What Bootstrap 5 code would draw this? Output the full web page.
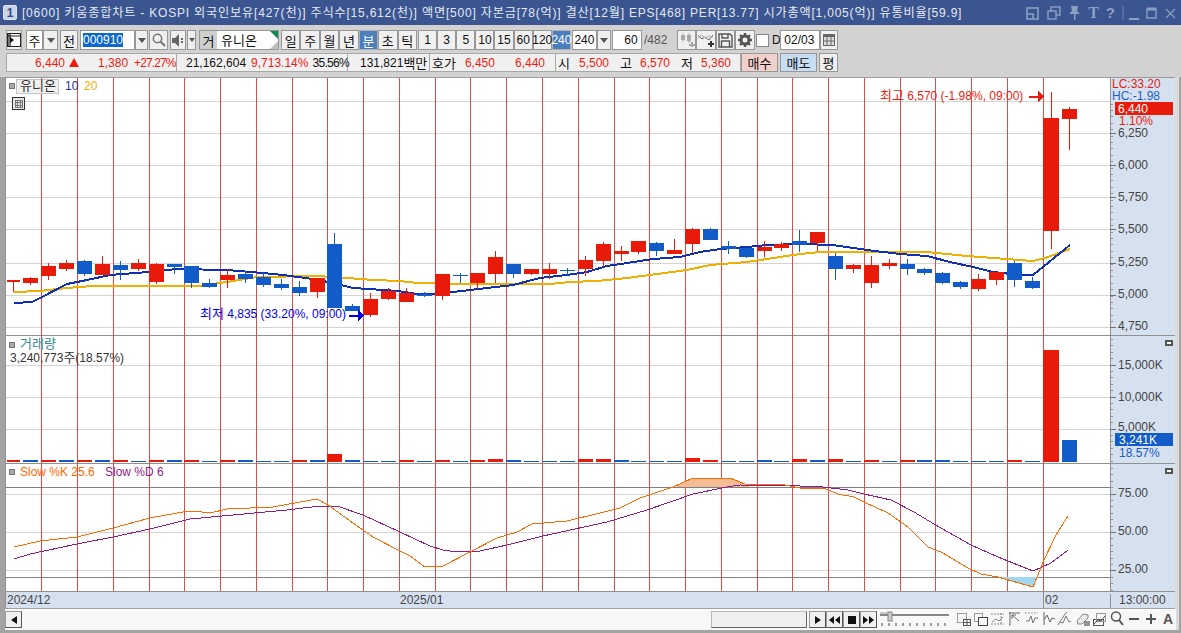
<!DOCTYPE html>
<html lang="ko">
<head>
<meta charset="utf-8">
<title>키움종합차트</title>
<link href="https://cdn.jsdelivr.net/npm/bootstrap@5.3.0/dist/css/bootstrap.min.css" rel="stylesheet">
<style>
html,body{height:100%;overflow:hidden}
body{font-family:"Liberation Sans","Noto Sans CJK KR",sans-serif;font-size:12px;line-height:1;background:linear-gradient(to right,#a3a3a3 0 5px,#dcdcdc 5px 1179px,#a3a3a3 1179px);color:#111}
.ko{font-family:"Noto Sans CJK KR","Liberation Sans",sans-serif;font-size:13px}
.hts-win{width:1181px;height:633px}
.hts-title{height:25px;background:#3a5590;color:#e4e9f3;padding-left:3px;font-size:12px;white-space:nowrap;flex:none}
.hts-titletext{letter-spacing:.79px}
.hts-title .ko{font-size:12.2px}
.hts-num{width:14px;height:15px;border:1px solid #dfe5f0;border-radius:2px;background:#c9d4e6;color:#2c4a8a;font-weight:700;margin-right:5px;font-size:12px}
.hts-ticons{margin-left:auto;padding-right:5px;gap:7px;color:#8d9fc3}
.ti-t{font:700 16px "Liberation Serif",serif}
.ti-q{font:700 15px "Liberation Sans",sans-serif}
.hts-tools{background:#d2d2d2;height:52px;padding:5px 0 0 6px;flex:none}
.hts-row1{height:20px;margin-bottom:3px}
.hts-row2{height:19px}
.btn.tb{--bs-btn-padding-x:0;--bs-btn-padding-y:0;--bs-btn-font-size:12px;--bs-btn-border-radius:0;--bs-btn-bg:#f0f0f0;--bs-btn-border-color:#979797;--bs-btn-color:#111;height:100%;display:flex;align-items:center;justify-content:center;flex:none;line-height:1;border-width:1px}
.btn.tb.on{--bs-btn-bg:#4a7ebd;--bs-btn-color:#fff;--bs-btn-border-color:#b0b0b0}
.tb-white{background:#fff;border:1px solid #979797;height:100%;display:flex;align-items:center;flex:none}
.wi16{width:16px}.wi9{width:9px}.wi13{width:13px}.wi14{width:14px}.wi15{width:15px}.wi17{width:17px}.wi18{width:18px}.wi19{width:19px}
.wi-d{width:19.43px}.wi-m{width:19.13px}.wi-t{width:19.5px}.wi25{width:25px}.wi30{width:30px}.wi40{width:40px}.wi55{width:55px}.wi80{width:80px}
.ml1{margin-left:1px}.ml2{margin-left:2px}.ml3{margin-left:3px}.ml4{margin-left:4px}
.hl{background:#0a68d0;color:#fff;padding:1px 0;margin-left:2px}
.gu{background:#cfcfcf;width:17px;height:100%;display:flex;align-items:center;justify-content:center}
.tri{position:absolute;right:0;top:0}
.hts-info{width:735px;height:100%;background:#f0f0f0;border:1px solid #a8a8a8;flex:none}
.cell{height:100%;display:flex;align-items:center;white-space:nowrap;flex:none}
.bd-r{border-right:1px solid #a8a8a8}
.red{color:#ee1c10}
.pct1{letter-spacing:-.9px}.pct2{letter-spacing:-.7px}
.cw170{width:170px}.cw171{width:171px}.cw82{width:82px}.cw126{width:126px}.rest{flex:1}
.pl28{padding-left:28px}.pl9{padding-left:9px}.pl12{padding-left:12px}.pl2{padding-left:2px}
.gapL5{margin-left:5px}.gapL4{margin-left:4px}.gapL6{margin-left:6px}.gapL9{margin-left:9px}.gapL11{margin-left:11px}.gapL19{margin-left:19px}.gapL20{margin-left:20px}.gapL8{margin-left:8px}
.noshrink{flex:none}
.buy{width:37px}
.sell{width:37px;margin-left:2px}
.btn.tb.buy{--bs-btn-bg:#f2d0cb}
.btn.tb.sell{--bs-btn-bg:#c7ddf3}
.greytxt{color:#555;width:35px;padding-left:2px;flex:none}
.dlbl{margin-left:3px;width:8px;flex:none}
.chk{width:13px;height:13px;background:#fff;border:1px solid #888;margin-left:1px;flex:none}
.hts-chart{margin-left:5px;width:1171px;height:533px;background:#fff;display:block;flex:none}
.hts-chart text{font-family:"Liberation Sans","Noto Sans CJK KR",sans-serif;font-size:12px}
.hts-chart .ko{font-size:13px}
.hts-scroll{height:20px;margin-left:5px;width:1171px;background:#f8f8f8;padding-top:1px;flex:none}
.sb-track{flex:1}
.sb-thumb{width:96px;height:17px;margin-right:2px;background:#efefef;border:1px solid #bbb;border-right-color:#666;border-bottom-color:#666;flex:none}
.btn.tb.sbb{height:17px;width:17px;--bs-btn-border-color:#999;border-right-color:#555;border-bottom-color:#555}
.bi-a{font:700 14px "Liberation Sans",sans-serif}
.hts-foot{height:3px;background:#a3a3a3;flex:none}
</style>
</head>
<body>
<div class="hts-win d-flex flex-column">
  <div class="hts-title d-flex align-items-center">
    <span class="hts-num d-flex align-items-center justify-content-center">1</span>
    <span class="hts-titletext">[0600] 키움종합차트 - KOSPI 외국인보유[427(천)] 주식수[15,612(천)] 액면[500] 자본금[78(억)] 결산[12월] EPS[468] PER[13.77] 시가총액[1,005(억)] 유통비율[59.9]</span>
    <div class="hts-ticons d-flex align-items-center">
      <svg width="14" height="14" viewBox="0 0 14 14" fill="none" stroke="#8d9fc3" stroke-width="1.6"><rect x="1" y="2" width="11" height="11"/><path d="M1 8h6v5"/></svg>
      <svg width="14" height="14" viewBox="0 0 14 14" fill="none" stroke="#8d9fc3" stroke-width="1.4"><rect x="4" y="1" width="9" height="8"/><rect x="1" y="5" width="8" height="8" fill="#3a5590"/></svg>
      <svg width="13" height="15" viewBox="0 0 13 15" fill="#8d9fc3"><path d="M3 1h7l-1 5 3 3H1l3-3zM6 9h1.400v6H6z"/></svg>
      <span class="ti-t">T</span>
      <span class="ti-q">?</span>
      <svg width="54" height="16" viewBox="0 0 54 16" fill="none" stroke="#8d9fc3" stroke-width="2"><path d="M1 1v14" stroke-width="1" stroke="#7186b0"/><path d="M7 14h10"/><rect x="25" y="4" width="9" height="9" stroke-width="1.4"/><path d="M25 4h9" stroke-width="3"/><path d="M44 4l9 9m0-9l-9 9" stroke-width="1.2"/></svg>
    </div>
  </div>

  <div class="hts-tools">
    <div class="hts-row1 d-flex">
      <button class="btn tb wi16"><svg width="14" height="14" viewBox="0 0 14 14"><rect x=".5" y=".5" width="13" height="13" fill="#fff" stroke="#222"/><rect x="1" y="1" width="3" height="12" fill="#777"/><path d="M1 3h12" stroke="#222"/><path d="M7 7L3 4v6z" fill="#111"/></svg></button>
      <div class="tb-white wi17 ml4 justify-content-center">주</div>
      <button class="btn tb wi15"><svg width="8" height="5"><path d="M0 0h8L4 5z" fill="#555"/></svg></button>
      <button class="btn tb wi18 ml2">전</button>
      <div class="tb-white wi55 ml2"><span class="hl">000910</span></div>
      <button class="btn tb wi13"><svg width="8" height="5"><path d="M0 0h8L4 5z" fill="#555"/></svg></button>
      <button class="btn tb wi19 ml1"><svg width="14" height="14" viewBox="0 0 14 14" fill="none" stroke="#777" stroke-width="1.5"><circle cx="5.5" cy="5.5" r="4.2"/><path d="M8.700 8.700L13 13" stroke-width="2"/></svg></button>
      <button class="btn tb wi16 ml2"><svg width="13" height="13" viewBox="0 0 13 13" fill="#666"><path d="M0 4h3l4-4v13L3 9H0z"/><path d="M9 4h2v2H9zM9 7h2v2H9z"/></svg></button>
      <button class="btn tb wi9 ml1"><svg width="6" height="4"><path d="M0 0h6L3 4z" fill="#555"/></svg></button>
      <div class="tb-white wi80 ml3 position-relative"><span class="gu">거</span><span class="ms-1">유니온</span>
        <svg class="tri" width="9" height="18" viewBox="0 0 9 18"><path d="M1 0h8v8z" fill="#0c8a50"/><path d="M9 10v8H1z" fill="#c0c0c0"/></svg></div>
      <button class="btn tb wi-d ml2">일</button><button class="btn tb wi-d">주</button><button class="btn tb wi-d">월</button><button class="btn tb wi-d">년</button><button class="btn tb wi-d on">분</button><button class="btn tb wi-d">초</button><button class="btn tb wi-d">틱</button>
      <button class="btn tb wi-m ml1">1</button><button class="btn tb wi-m">3</button><button class="btn tb wi-m">5</button><button class="btn tb wi-m">10</button><button class="btn tb wi-m">15</button><button class="btn tb wi-m">60</button><button class="btn tb wi-m">120</button><button class="btn tb wi-m on">240</button>
      <div class="tb-white wi25 ml1 justify-content-center">240</div>
      <button class="btn tb wi14"><svg width="8" height="5"><path d="M0 0h8L4 5z" fill="#555"/></svg></button>
      <div class="tb-white wi30 ml1 justify-content-end">60&nbsp;</div>
      <div class="greytxt d-flex align-items-center">/482</div>
      <button class="btn tb wi-t"><svg width="16" height="14" viewBox="0 0 16 14" fill="#a8a8a8"><path d="M2 2h4v5H2zM8 2h4v6H8zM12 9h2v2h2v2h-2v1h-2v-1h-2v-2h2zM3.500 0h1v9h-1zM9.500 0h1v10h-1z"/></svg></button>
      <button class="btn tb wi-t"><svg width="17" height="14" viewBox="0 0 17 14" fill="none" stroke="#666"><path d="M0 2l4 4 3-2 4 3 4-5"/><path d="M0 5l4-3 3 3 4-2 4 1" stroke="#aaa"/><path d="M12 8h2v2h2v2h-2v2h-2v-2h-2v-2h2z" fill="#333" stroke="none"/></svg></button>
      <button class="btn tb wi-t"><svg width="15" height="15" viewBox="0 0 15 15" fill="none" stroke="#555" stroke-width="1.400"><path d="M1 1h11l2 2v11H1z"/><path d="M4 1v4h6V1M3.500 14V8h8v6"/></svg></button>
      <button class="btn tb wi-t"><svg width="14" height="14" viewBox="0 0 14 14"><circle cx="7" cy="7" r="4" fill="none" stroke="#555" stroke-width="3"/><path d="M7 0v3M7 11v3M0 7h3M11 7h3M2 2l2 2M10 10l2 2M12 2l-2 2M2 12l2-2" stroke="#555" stroke-width="2.400"/></svg></button>
      <div class="align-self-center chk"></div>
      <div class="dlbl align-self-center">D</div>
      <div class="tb-white wi40">&nbsp;02/03</div>
      <button class="btn tb wi18"><svg width="12" height="12" viewBox="0 0 12 12"><rect width="12" height="12" fill="#666"/><rect x="1" y="3" width="10" height="8" fill="#ddd"/><path d="M4 3v8M8 3v8M1 7h10" stroke="#666"/></svg></button>
    </div>
    <div class="hts-row2 d-flex">
      <div class="hts-info d-flex">
        <div class="cell cw170 bd-r red pl28"><span>6,440</span><svg class="gapL4 noshrink" width="10" height="9"><path d="M5 0l5 9H0z" fill="#ee1c10"/></svg><span class="gapL19">1,380</span><span class="gapL6 pct1">+27.27%</span></div>
        <div class="cell cw171 bd-r pl9"><span>21,162,604</span><span class="red gapL5">9,713.14%</span><span class="gapL4 pct2">35.56%</span></div>
        <div class="cell cw82 bd-r pl12">131,821백만</div>
        <div class="cell cw126 bd-r pl2"><span>호가</span><span class="red gapL9">6,450</span><span class="red gapL20">6,440</span></div>
        <div class="cell rest pl2"><span>시</span><span class="red gapL9">5,500</span><span class="gapL11">고</span><span class="red gapL8">6,570</span><span class="gapL11">저</span><span class="red gapL8">5,360</span></div>
      </div>
      <button class="btn tb buy">매수</button>
      <button class="btn tb sell">매도</button>
      <button class="btn tb wi19 ml2">평</button>
    </div>
  </div>

  <svg class="hts-chart" id="chart" viewBox="5 77 1171 533" shape-rendering="crispEdges"></svg>

  <div class="hts-scroll d-flex">
    <button class="btn tb sbb"><svg width="6" height="8"><path d="M6 0v8L0 4z" fill="#111"/></svg></button>
    <div class="sb-track"></div>
    <div class="sb-thumb"></div>
    <button class="btn tb sbb"><svg width="6" height="8"><path d="M0 0v8l6-4z" fill="#111"/></svg></button>
    <button class="btn tb sbb"><svg width="11" height="8"><path d="M5 0v8L0 4zM11 0v8L6 4z" fill="#111"/></svg></button>
    <button class="btn tb sbb"><svg width="8" height="8"><rect width="8" height="8" fill="#111"/></svg></button>
    <button class="btn tb sbb"><svg width="11" height="8"><path d="M0 0v8l5-4zM6 0v8l5-4z" fill="#111"/></svg></button>
    <svg width="299" height="17" viewBox="877 611 299 17" fill="none" stroke="#777">
      <path d="M880 615h69" stroke="#888" stroke-width="2"/><path d="M880 613h10" stroke="#999"/>
      <rect x="888" y="612" width="4" height="9" fill="#ccc" stroke="#888"/>
      <path d="M882 623v3M889 623v3M896 623v3M903 623v3M910 623v3M917 623v3M924 623v3M931 623v3M938 623v3M945 623v3" stroke="#444"/>
      <rect x="957.500" y="613.500" width="9" height="9" stroke="#999"/><rect x="963.500" y="619.500" width="7" height="6" fill="#f8f8f8" stroke="#555"/><path d="M967 619v7M963 622.500h7" stroke="#555"/>
      <rect x="974.500" y="613.500" width="8" height="8" stroke="#999"/><rect x="978.500" y="617.500" width="9" height="8" fill="#f8f8f8" stroke="#444"/>
      <path d="M991 614h13M991 624h13M1001 613v12" stroke-dasharray="2 1" stroke="#888"/><path d="M992 622l4-3 3 2 4-4" stroke="#888"/>
      <path d="M1010 612v13h-1M1009 613h11M1012 615l7 6M1012 615v4M1012 615h4" stroke="#666"/>
      <path d="M1025 613h13" stroke="#999" stroke-dasharray="2 1"/><path d="M1026 621h3l2-5 2 7 2-5h3" stroke="#777"/>
      <path d="M1044 625V612M1044 620l3-5 3 7 2-4 3 1" stroke="#666"/>
      <path d="M1058 625l7-11 2-2M1060 622l3 1 3-7 3 6 2-1" stroke="#777"/>
      <path d="M1077 621l6-7 5 1v3l-6 6h-4z" fill="#e8e8e8" stroke="#888"/><path d="M1085 621v5M1087 621v5M1089 621v5" stroke="#333"/>
      <rect x="1093.500" y="619.500" width="10" height="6" stroke="#555"/><rect x="1096.500" y="613.500" width="9" height="8" stroke="#999"/><path d="M1094 624l4-4 3 1 4-5" stroke="#555"/>
      <circle cx="1116" cy="616.500" r="4.500" stroke="#555" stroke-width="1.500"/><path d="M1119 620l4 5" stroke="#555" stroke-width="2"/>
      <path d="M1129 619h10" stroke="#555" stroke-width="2"/><path d="M1146 619h10M1151 614v10" stroke="#555" stroke-width="2"/>
      <text class="bi-a" x="1163" y="624" fill="#555" stroke="none">A</text>
    </svg>
  </div>
  <div class="hts-foot"></div>
</div>

<script>
const svg=document.getElementById('chart'),NS='http://www.w3.org/2000/svg';
function add(t,a,p){const e=document.createElementNS(NS,t);for(const k in a)e.setAttribute(k,a[k]);(p||svg).appendChild(e);return e}
function rect(x,y,w,h,f){return add('rect',{x,y,width:w,height:h,fill:f})}
function line(x1,y1,x2,y2,s,w){return add('line',{x1,y1,x2,y2,stroke:s,'stroke-width':w||1})}
function pl(p,s,w){return add('polyline',{points:p.join(' '),fill:'none',stroke:s,'stroke-width':w||1})}
function txt(x,y,s,f,ta){const e=add('text',{x,y,fill:f||'#333','text-anchor':ta||'start','shape-rendering':'auto'});e.textContent=s;return e}
const R='#e81b0b',B='#125cc9',G='#d4d4d4',D='#808080',V='#dd4b4b';
rect(5,77,1105,514,'#fff');
rect(1110,77,65,532,'#d6e1f0');
rect(1175,77,1,532,'#dcdcdc');
[101,133,165,197,229,263,295,327,365,397,429,494,532,570].forEach(y=>line(6,y+.5,1110,y+.5,G));
[487,577].forEach(y=>line(6,y+.5,1110,y+.5,D));
[335,463].forEach(y=>line(6,y+.5,1175,y+.5,'#909090'));
[41,77,113,149,184,220,256,292,327,363,399,435,470,506,542,578,614,649,685,721,757,792,828,864,900,935,971,1007,1043].forEach(x=>line(x+.5,77,x+.5,591,V));
const ma20=[14,292,40,291,67,288,93,286,200,286,233,281,257,277,317,276,347,278,373,280,400,281,417,283,460,284,550,284,570,282,597,281,627,278,687,270,710,265,747,262,800,254,820,252,927,252,967,256,1033,261,1045,258,1070,249];
const ma10=[14,303,32,302,42,297,67,284,87,280,110,275,148,272,177,269,227,270,263,273,283,275,313,279,333,283,353,288,398,291,417,294,433,294,453,292,487,288,513,285,540,278,567,275,587,272,607,266,627,263,653,259,680,257,700,252,720,249,747,247,767,245,800,244,833,245,867,250,900,254,927,256,950,262,973,267,993,272,1020,275,1033,275,1070,245];
pl(ma20,'#efaf00',2);pl(ma10,'#0f2fb4',2);
const c=[[280,282,280,292,R],[278,283,277,285,R],[266,276,263,280,R],[263,269,260,271,R],[261,274,260,276,B],[264,275,256,275,R],[265,270,261,280,B],[263,269,259,271,R],[264,282,263,284,R],[264,267,264,274,B],[266,283,266,288,B],[283,287,279,288,B],[275,280,269,288,R],[274,279,271,283,B],[277,285,272,287,B],[284,288,279,290,B],[287,293,281,296,B],[278,292,278,298,R],[244,308,233,308,B],[306,311,304,311,B],[299,315,293,317,R],[291,299,288,300,R],
[293,302,288,302,R],[294,296,292,297,B],[274,296,274,300,R],[275,276,273,283,B],[273,283,273,289,R],[257,274,251,283,R],[264,274,264,278,B],[269,274,269,275,R],[269,274,263,279,R],[270,271,268,275,B],[260,269,256,276,R],[244,261,242,266,R],[251,254,246,261,R],[241,252,241,254,R],[243,251,242,256,B],[250,254,239,254,R],[229,244,228,253,R],[229,240,228,240,B],[246,249,241,254,B],[248,257,248,258,B],[247,251,241,257,R],[244,248,242,251,R],[241,245,230,252,B],[232,243,232,251,R],[256,269,253,280,B],[265,269,264,273,R],[265,283,256,288,R],[263,266,259,269,R],[264,269,259,275,B],[269,273,268,275,B],[273,283,272,284,B],[282,287,281,289,B],[279,289,274,291,R],[272,280,272,285,R],[263,280,261,287,B],[281,288,277,289,B],[118,231,92,249,R],[109,119,107,150,R]];
const vol=[2,2,2,2,2,2,2,1,2,2,2,1,2,2,1,1,2,2,8,2,1,1,2,1,2,1,2,3,2,1,1,1,3,3,2,1,1,1,4,2,1,1,2,1,3,2,3,1,2,1,2,2,2,1,1,1,2,1,112,22];
const vc='rbrbrbrbrbrbrbbbrbrbbb'+'rbrbrrbbbbrrbbbbrrbbbb'+'rbrbrbrbbbbbrbrb';
c.forEach((k,i)=>{let l=i==59?1062:Math.round(5.6+17.88*i),w=i==58?16:15;const x=i==58?1051:l+7;if(i==0){l=7;w=13}
 rect(x,k[2],1,k[3]-k[2],k[4]);rect(l,k[0],w,Math.max(1,k[1]-k[0]),k[4]);
 rect(l,462-vol[i],w,vol[i],vc[i]=='r'?R:B);});
add('polygon',{points:'673,487 693,478 730,478 745,484 750,487',fill:'#f4bd96'});
add('polygon',{points:'998,577 1033,587 1038,577',fill:'#9fd8ee'});
pl([14,559,30,554,77,544,113,537,150,529,190,519,233,515,287,510,320,506,337,506,363,515,400,532,430,546,443,550,457,552,480,551,507,545,543,536,607,522,647,510,693,494,727,487,740,485,800,486,823,487,848,490,864,494,891,500,914,512,934,524,971,545,998,557,1033,571,1051,563,1068,550],'#8f1b86');
pl([14,547,40,541,77,537,113,528,150,518,183,512,193,511,210,513,227,509,273,507,317,499,328,505,360,528,373,537,400,551,410,556,425,567,443,566,470,552,497,538,517,532,532,524,567,521,600,513,620,508,640,498,673,487,693,478,730,478,745,484,785,485,800,488,824,488,838,494,854,497,864,502,888,513,908,527,928,547,941,552,968,568,981,574,998,577,1033,587,1044,560,1056,535,1068,516],'#ff6a00');
rect(5,591,1170,18,'#d6e1f0');line(5,591.5,1175,591.5,'#909090');line(5,608.5,1175,608.5,'#a0a0a0');
line(1110.5,77,1110.5,591,'#909090');line(1043.5,591,1043.5,608,'#909090');line(1110.5,594,1110.5,608,'#909090');
line(5,77.5,1175,77.5,'#9a9a9a');
line(5.5,77,5.5,609,'#909090');
for(let y=103.5;y<330;y+=6.4)line(1110,Math.round(y)+.5,1113,Math.round(y)+.5,'#909090');
for(let y=339;y<462;y+=6.4)line(1110,Math.round(y)+.5,1113,Math.round(y)+.5,'#909090');
for(let y=468;y<590;y+=6.4)line(1110,Math.round(y)+.5,1113,Math.round(y)+.5,'#909090');
[133,165,197,229,263,295,327,365,397,429,494,532,570].forEach(y=>line(1110,y+.5,1116,y+.5,'#707070'));
const ax='#444';
[[133,'6,250'],[165,'6,000'],[197,'5,750'],[229,'5,500'],[262,'5,250'],[294,'5,000'],[326,'4,750']].forEach(a=>txt(1118,a[0]+4,a[1],ax));
[[365,'15,000K'],[397,'10,000K'],[427,'5,000K'],[493,'75.00'],[531,'50.00'],[569,'25.00']].forEach(a=>txt(1118,a[0]+4,a[1],ax));
txt(1112,88,'LC:33.20',R);txt(1112,100,'HC:-1.98','#1a5fd0');
rect(1115,102,58,13,R);txt(1118,112.5,'6,440','#fff');txt(1119,125,'1.10%',R);
rect(1115,433,58,13,B);txt(1119,444,'3,241K','#fff');txt(1119,457,'18.57%',B);
[[1169,343],[1169,471]].forEach(p=>{rect(p[0]-4,p[1]-3,8,6,'#555');add('path',{d:`M${p[0]-2} ${p[1]-1}l4 2m0-2l-4 2`,stroke:'#fff','stroke-width':1,fill:'none'})});
txt(7,604,'2024/12',ax);txt(400,604,'2025/01',ax);txt(1045,604,'02',ax);txt(1119,604,'13:00:00',ax);
rect(9,83,5,5,'#aaa').setAttribute('stroke','#777');
rect(16,79,42,14,'#f0f0f0').setAttribute('stroke','#c4c4c4');
txt(20,90,'유니온','#333');txt(65,90,'10','#1a2fa0');txt(84,90,'20','#efaf00');
const g=add('g',{fill:'none',stroke:'#333'});add('rect',{x:12.5,y:97.5,width:12,height:12,fill:'#e8e8e8'},g);add('path',{d:'M15 100h7v7h-7zM17.500 100v7M20 100v7M15 102.500h7M15 105h7',stroke:'#777'},g);
txt(880,100,'최고 6,570 (-1.98%, 09:00)','#ee1c10');
line(1029,96.5,1041,96.5,'#ee1c10',2);add('path',{d:'M1038 91l6 5.500-6 5.500z',fill:'#ee1c10'});
txt(200,318,'최저 4,835 (33.20%, 09:00)','#0000f0');
line(349,315.5,361,315.5,'#0000f0',2);add('path',{d:'M358 310l6 5.500-6 5.500z',fill:'#0000f0'});
rect(9,342,5,5,'#aaa').setAttribute('stroke','#777');txt(20,348,'거래량','#2e8c8c');
txt(10,362,'3,240,773주(18.57%)','#333');
rect(9,469,5,5,'#aaa').setAttribute('stroke','#777');txt(20,476,'Slow %K 25.6','#ff6a00');txt(105,476,'Slow %D 6','#8f1b86');

function wrapKo(root){const w=document.createTreeWalker(root,NodeFilter.SHOW_TEXT),ns=[];while(w.nextNode()){const p=w.currentNode.parentNode.tagName;if(/[\uac00-\ud7a3]/.test(w.currentNode.data)&&p!=='SCRIPT'&&p!=='TITLE')ns.push(w.currentNode)}
 ns.forEach(n=>{const f=document.createDocumentFragment(),inSvg=n.parentNode.namespaceURI===NS;n.data.split(/([\uac00-\ud7a3]+)/).forEach((s,i)=>{if(!s)return;if(i%2){const e=inSvg?document.createElementNS(NS,'tspan'):document.createElement('span');e.setAttribute('class','ko');e.textContent=s;f.appendChild(e)}else f.appendChild(document.createTextNode(s))});n.parentNode.replaceChild(f,n)})}
wrapKo(document.body);
</script>
<script src="https://cdn.jsdelivr.net/npm/bootstrap@5.3.0/dist/js/bootstrap.bundle.min.js"></script>
</body>
</html>
